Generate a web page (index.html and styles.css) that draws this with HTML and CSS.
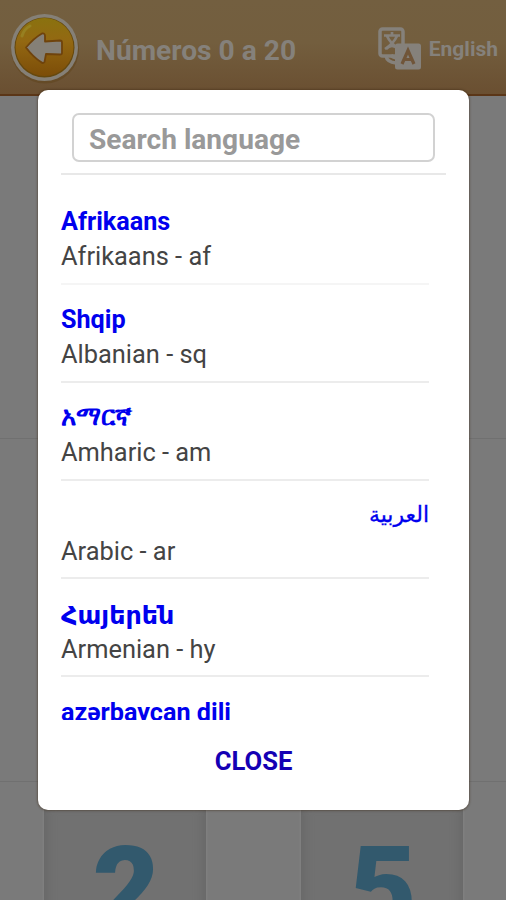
FILE: index.html
```html
<!DOCTYPE html>
<html lang="en">
<head>
<meta charset="utf-8">
<title>Números 0 a 20</title>
<link rel="stylesheet" href="styles.css">
</head>
<body>
<div class="screen">
  <header class="bar">
    <svg class="back" viewBox="0 0 70 72">
      <defs>
        <linearGradient id="gold" x1="0" y1="0" x2="0" y2="1">
          <stop offset="0" stop-color="#8a720f"/><stop offset=".4" stop-color="#936812"/><stop offset="1" stop-color="#7c4d08"/>
        </linearGradient>
      </defs>
      <circle cx="35" cy="36.500" r="34" fill="#604620" opacity=".6"/>
      <circle cx="34.500" cy="34.500" r="33.500" fill="#858077"/>
      <circle cx="34.500" cy="34.500" r="30" fill="#66480d"/>
      <circle cx="34.500" cy="34" r="29" fill="url(#gold)"/>
      <path d="M12 23Q14 16 20 13" fill="none" stroke="#a09a35" stroke-width="3" stroke-linecap="round" opacity=".45"/>
      <path d="M16 34.500Q24 25 32 20.500Q35 20 35 23V28.500L50 27.500Q52 27.500 52 29.500V40Q52 41.500 50 41.500L36 41L34.500 49Q33 51 31 49Q23 44 16 34.500Z" fill="#858077" stroke="#6f430c" stroke-width="1.800" stroke-linejoin="round"/>
    </svg>
    <h1 class="title">Números 0 a 20</h1>
    <svg class="translate" viewBox="0 0 44 44">
      <rect x="2" y="2" width="23" height="27" rx="2.500" fill="none" stroke="#85817b" stroke-width="3.500"/>
      <path d="M6 8.500H22M14 5V8M9 9Q12 16 21 22M19 9Q16 16 7 22M8 22Q14 16 20 22" fill="none" stroke="#85817b" stroke-width="2.700"/>
      <path d="M8 29Q9 35 18 36M13 28Q15 31 20 31" fill="none" stroke="#85817b" stroke-width="3.500"/>
      <rect x="17" y="16.500" width="26" height="26" rx="2.500" fill="#85817b"/>
      <path d="M24 37L30 23.500L36 37M26.500 32.500H33.500" fill="none" stroke="#705539" stroke-width="3.200"/>
    </svg>
    <span class="lang">English</span>
  </header>
  <main class="rows">
    <div class="row"></div>
    <div class="row"></div>
    <div class="tiles">
      <div class="tile">2</div>
      <div class="tile">5</div>
    </div>
  </main>
  <div class="dialog">
    <div class="searchwrap"><input class="search" type="text" placeholder="Search language"></div>
    <div class="list">
      <div class="item"><b>Afrikaans</b><span>Afrikaans - af</span></div>
      <div class="item"><b>Shqip</b><span>Albanian - sq</span></div>
      <div class="item"><b class="am">አማርኛ</b><span>Amharic - am</span></div>
      <div class="item"><b class="ar" dir="rtl">العربية</b><span>Arabic - ar</span></div>
      <div class="item"><b class="hy">Հայերեն</b><span>Armenian - hy</span></div>
      <div class="item"><b>azərbaycan dili</b></div>
    </div>
    <button class="close">CLOSE</button>
  </div>
</div>
</body>
</html>
```
FILE: styles.css
```css
* { box-sizing: border-box; }
body { margin: 0; font-family: Roboto, "Noto Sans", "DejaVu Sans", sans-serif; }
.screen { position: relative; width: 506px; height: 900px; overflow: hidden; background: #7a7a7a; display: flex; flex-direction: column; }
.bar { flex: none; height: 96px; display: flex; align-items: center; padding: 0 8px 0 10px; background: linear-gradient(#735f40 0%, #735e3e 45%, #6a4f31 100%); border-bottom: 2px solid #5b3617; }
.back { width: 70px; height: 72px; flex: none; margin-top: 4px; }
.title { margin: 7px auto 0 16px; font-size: 28.200px; line-height: 32px; font-weight: 700; color: #85817b; white-space: nowrap; }
.translate { width: 44px; height: 44px; margin-top: 3px; margin-right: 7px; }
.lang { font-size: 21px; font-weight: 700; color: #85817b; margin-top: 4px; }
.rows { flex: 1; display: flex; flex-direction: column; }
.row { flex: none; height: 343px; border-bottom: 1px solid #707070; }
.tiles { flex: 1; display: flex; justify-content: space-between; padding: 20px 43px 0 44px; }
.tile { width: 162px; background: #717171; box-shadow: inset 0 0 12px #626262, 0 0 3px #888; color: #32596d; font-size: 116px; line-height: 142px; font-weight: 900; text-align: center; padding: 16px 0 0 2px; }
.dialog { position: absolute; left: 38px; top: 90px; width: 431px; height: 720px; border-radius: 10px; background: #fff; box-shadow: 0 0 2px 1px rgba(60,40,20,.4); padding: 0 23px; display: flex; flex-direction: column; }
.searchwrap { height: 85px; flex: none; padding: 23px 11px 0; border-bottom: 2px solid #e8e8e8; }
.search { display: block; width: 363px; height: 49px; border: 2px solid #d2d2d2; border-radius: 7px; padding: 4px 15px 0; font: 700 28.100px Roboto, sans-serif; outline: none; background: #fff; }
.search::placeholder { color: #999; opacity: 1; }
.list { height: 545px; flex: none; overflow: hidden; padding: 11.500px 17px 0 0; }
.item { height: 98.200px; border-bottom: 2px solid #ececec; padding-top: 18.600px; display: flex; flex-direction: column; color: #444; }
.item:first-child { border-bottom-color: #f5f5f5; }
.item b { font-size: 25.200px; line-height: 34px; height: 34px; color: #00e; white-space: nowrap; }
.item span { font-size: 25.400px; line-height: 35px; height: 35px; white-space: nowrap; }
.item .am { position: relative; top: -2px; font-size: 25.600px; }
.item .ar { position: relative; top: -2px; font-family: "DejaVu Sans", sans-serif; font-weight: 400; font-size: 22px; -webkit-text-stroke: .3px #00e; }
.item .hy { font-family: "DejaVu Sans", sans-serif; font-size: 25.400px; }
.close { align-self: center; margin-top: 25px; border: 0; padding: 0; background: none; font: 700 25.600px/32px Roboto, sans-serif; color: #1400b4; }
```
